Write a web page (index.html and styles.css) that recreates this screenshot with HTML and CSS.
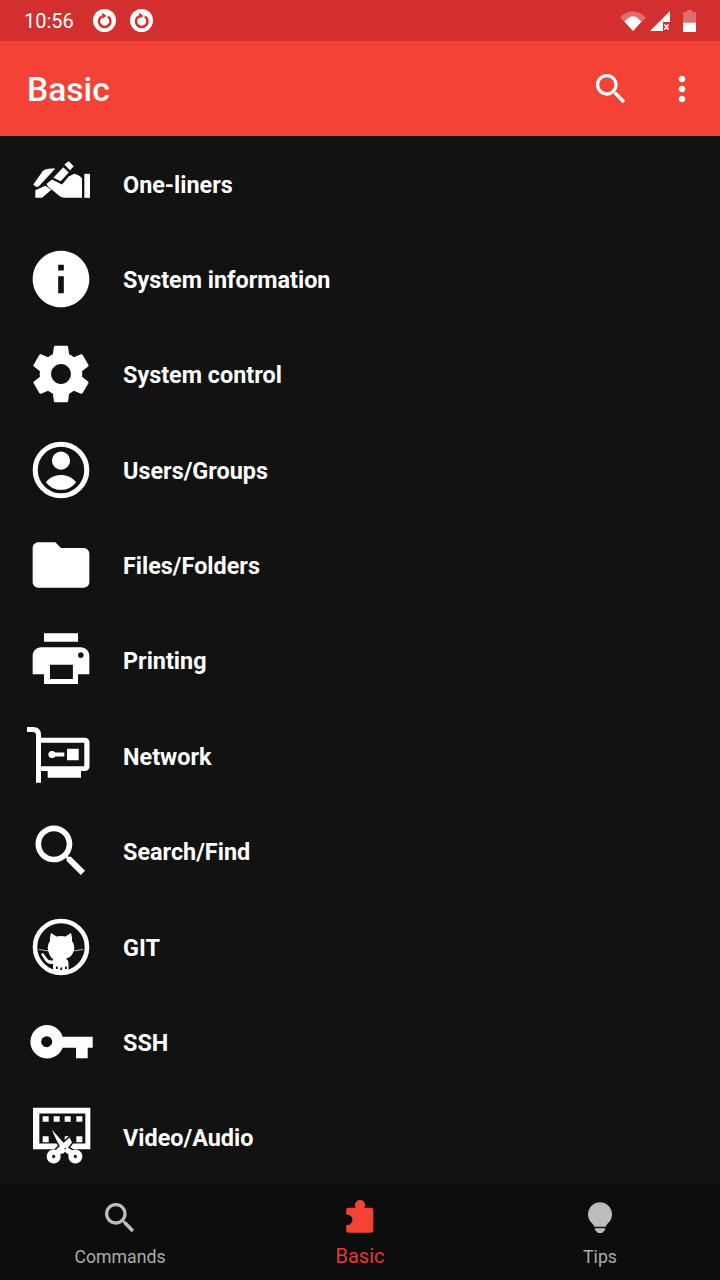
FILE: index.html
```html
<!DOCTYPE html>
<html lang="en">
<head>
  <meta charset="UTF-8" />
  <meta name="viewport" content="width=device-width, initial-scale=1" />
  <title>Basic</title>
  <link rel="stylesheet" href="styles.css">
</head>
<body>

<div class="status-bar">
  <span class="clock">10:56</span>
  <svg class="note-icon" viewBox="0 0 24 24"><circle cx="12" cy="12" r="12" fill="#fff"/><path d="M9.300 7.600a6 6 0 1 0 6.200.2" fill="none" stroke="#d32f2f" stroke-width="2.600"/><path d="M9.600 3.600l4.400 3.600-4.400 3z" fill="#d32f2f"/></svg>
  <svg class="note-icon" viewBox="0 0 24 24"><circle cx="12" cy="12" r="12" fill="#fff"/><path d="M9.300 7.600a6 6 0 1 0 6.200.2" fill="none" stroke="#d32f2f" stroke-width="2.600"/><path d="M9.600 3.600l4.400 3.600-4.400 3z" fill="#d32f2f"/></svg>
  <div class="status-right">
    <svg class="wifi-icon" viewBox="0 0 26 20"><path d="M0 6.500C3.500 2.500 8 .2 13 .2s9.500 2.300 13 6.300L13 20z" fill="#fff" fill-opacity=".3"/><path d="M4.500 10.500C7 8.300 9.800 5.200 13 5.200s6 3.100 8.500 5.300L13 20z" fill="#fff"/></svg>
    <svg class="cell-icon" viewBox="0 0 20 20"><path d="M0 20L20 0v11h-7v9z" fill="#fff"/><path d="M14.500 13.500l4 5m0-5l-4 5" stroke="#fff" stroke-width="1.600"/></svg>
    <svg class="battery-icon" viewBox="0 0 13 22"><path d="M4 0h5v2h4v10H0V2h4z" fill="#fff" fill-opacity=".3"/><path d="M0 12.500h13V22H0z" fill="#fff"/></svg>
  </div>
</div>

<header class="app-bar">
  <h1>Basic</h1>
  <svg class="bar-icon" viewBox="0 0 24 24"><path d="M15.500 14h-.79l-.28-.27C15.410 12.590 16 11.110 16 9.500 16 5.910 13.090 3 9.500 3S3 5.910 3 9.500 5.910 16 9.500 16c1.610 0 3.090-.59 4.230-1.570l.27.28v.79l5 4.990L20.490 19l-4.990-5zm-6 0C7.010 14 5 11.990 5 9.500S7.010 5 9.500 5 14 7.010 14 9.500 11.990 14 9.500 14z"/></svg>
  <svg class="bar-icon" viewBox="0 0 24 24"><path d="M12 8c1.100 0 2-.9 2-2s-.9-2-2-2-2 .9-2 2 .9 2 2 2zm0 2c-1.100 0-2 .9-2 2s.9 2 2 2 2-.9 2-2-.9-2-2-2zm0 6c-1.100 0-2 .9-2 2s.9 2 2 2 2-.9 2-2-.9-2-2-2z"/></svg>
</header>

<main class="topic-list">
  <div class="topic">
    <svg class="topic-icon" viewBox="3 -13.500 204 204">
      <path d="M22 90L50 50Q58 40 88 42L38 96Q30 100 22 90z"/>
      <path d="M28 130V107L58 94L76 106L48 130z"/>
      <path d="M82 70L112 38L128 54L104 80z"/>
      <path d="M115 30L128 20L143 35L132 47z"/>
      <path d="M62 88L78 75L108 90L128 66L145 58Q163 63 168 72V130H115Q105 130 95 120L65 95z"/>
      <path d="M175 58H192V130H175z"/>
    </svg>
    <span>One-liners</span>
  </div>
  <div class="topic">
    <svg class="topic-icon" viewBox="0 0 24 24"><path d="M12 2C6.480 2 2 6.480 2 12s4.480 10 10 10 10-4.480 10-10S17.520 2 12 2zm1 15h-2v-6h2v6zm0-8h-2V7h2v2z"/></svg>
    <span>System information</span>
  </div>
  <div class="topic">
    <svg class="topic-icon" viewBox="0 0 24 24"><path d="M19.430 12.980c.04-.32.07-.64.07-.98s-.03-.66-.07-.98l2.110-1.650c.19-.15.24-.42.12-.64l-2-3.460c-.12-.22-.39-.3-.61-.22l-2.490 1c-.52-.4-1.080-.73-1.690-.98l-.38-2.650C14.460 2.180 14.250 2 14 2h-4c-.25 0-.46.18-.49.42l-.38 2.650c-.61.25-1.170.59-1.690.98l-2.490-1c-.23-.09-.49 0-.61.22l-2 3.460c-.13.22-.07.49.12.64l2.110 1.650c-.04.32-.07.65-.07.98s.03.66.07.98l-2.110 1.650c-.19.15-.24.42-.12.64l2 3.460c.12.22.39.3.61.22l2.490-1c.52.4 1.080.73 1.690.98l.38 2.650c.03.24.24.42.49.42h4c.25 0 .46-.18.49-.42l.38-2.650c.61-.25 1.170-.59 1.690-.98l2.490 1c.23.09.49 0 .61-.22l2-3.460c.12-.22.07-.49-.12-.64l-2.110-1.650zM12 15.500c-1.930 0-3.500-1.570-3.500-3.500s1.570-3.500 3.500-3.500 3.500 1.570 3.500 3.500-1.570 3.500-3.500 3.500z"/></svg>
    <span>System control</span>
  </div>
  <div class="topic">
    <svg class="topic-icon" viewBox="0 0 24 24">
      <circle cx="12" cy="12" r="9.100" fill="none" stroke="currentColor" stroke-width="1.800"/>
      <circle cx="12" cy="8.700" r="3.200"/>
      <path d="M6.700 16.300C8 14.600 10 13.800 12 13.800s4 .8 5.300 2.500C16 18 14.200 19 12 19s-4-1-5.300-2.700z"/>
    </svg>
    <span>Users/Groups</span>
  </div>
  <div class="topic">
    <svg class="topic-icon" viewBox="0 0 24 24"><path d="M10 4H4c-1.100 0-2 .9-2 2v12c0 1.100.9 2 2 2h16c1.100 0 2-.9 2-2V8c0-1.100-.9-2-2-2h-8l-2-2z"/></svg>
    <span>Files/Folders</span>
  </div>
  <div class="topic">
    <svg class="topic-icon" viewBox="0 0 24 24"><path d="M6 2.600h12v3H6zM5 7.500h14c1.660 0 3 1.340 3 3V17h-4v3.500H6V17H2v-6.500c0-1.660 1.340-3 3-3zm3.100 6.200v5h8.100v-5zM19 9.300c-.55 0-1 .45-1 1s.45 1 1 1 1-.45 1-1-.45-1-1-1z" fill-rule="evenodd"/></svg>
    <span>Printing</span>
  </div>
  <div class="topic">
    <svg class="topic-icon" viewBox="0 0 68 68">
      <path d="M0 7.400H6Q11.500 7.400 11.500 13V60.800" fill="none" stroke="currentColor" stroke-width="5"/>
      <path d="M14 15.800H58a4.500 4.500 0 0 1 4.500 4.500V44.500a4.500 4.500 0 0 1-4.500 4.500H54V55.800H20.700V49H14V44.200H57.300V20.800H14z"/>
      <circle cx="25" cy="32.500" r="3.600"/>
      <path d="M27 30.500H37.300V34.500H27zM40 26.800H51.700V38.200H40z"/>
    </svg>
    <span>Network</span>
  </div>
  <div class="topic">
    <svg class="topic-icon" viewBox="0 0 24 24"><path d="M15.500 14h-.79l-.28-.27C15.410 12.590 16 11.110 16 9.500 16 5.910 13.090 3 9.500 3S3 5.910 3 9.500 5.910 16 9.500 16c1.610 0 3.090-.59 4.230-1.570l.27.28v.79l5 4.990L20.490 19l-4.990-5zm-6 0C7.010 14 5 11.990 5 9.500S7.010 5 9.500 5 14 7.010 14 9.500 11.990 14 9.500 14z"/></svg>
    <span>Search/Find</span>
  </div>
  <div class="topic">
    <svg class="topic-icon" viewBox="0 0 68 68">
      <circle cx="34" cy="34" r="26" fill="none" stroke="currentColor" stroke-width="4.600"/>
      <path d="M24 20L29.500 23.500Q34 22.600 38.500 23.500L44 20Q45.500 25 45 28Q48 32 47 37Q45.500 44 39 45.500Q41.500 47 41.500 50V59H26V51H24Q20 51 17 46L14 41L16 40L19 44Q21 48 26 47.500V46Q22.500 44 21 37Q20 32 23 28Q22.500 25 24 20z"/>
      <path d="M12 36.500L22 38M46 38L56 36.500" fill="none" stroke="currentColor" stroke-width=".7"/>
      <path d="M29 53.500h1.800v2.600H29zM33.300 54.500h1.800v2.600h-1.800zM38 53.500h1.800v2.600H38z" fill="#121212"/>
    </svg>
    <span>GIT</span>
  </div>
  <div class="topic">
    <svg class="topic-icon" viewBox="0 0 68 68"><path d="M19.700 17a16.700 16.700 0 0 1 16 11.700H65.700V39.700H60.700V50.300H49V39.700H35.700A16.700 16.700 0 1 1 19.700 17zM19.700 28.200a5.500 5.500 0 1 0 0 11 5.500 5.500 0 0 0 0-11z" fill-rule="evenodd"/></svg>
    <span>SSH</span>
  </div>
  <div class="topic">
    <svg class="topic-icon" viewBox="0 -4.500 204 204">
      <path d="M18 10H190V134H18zM37 27V117H175V27z" fill-rule="evenodd"/>
      <path d="M47 35h18v17H47zM80 35h18v17H80zM113 35h18v17h-18zM148 35h18v17h-18zM47 95h18v18H47zM113 95h18v18h-18zM148 95h18v18h-18z"/>
      <path d="M75 76L122 129Q135 136 140 141L125 151L105 136Q85 104 75 76zM128 99L135 114L110 146L92 151L88 134z" stroke="#121212" stroke-width="9" fill="#121212"/>
      <path d="M75 76L122 129Q135 136 140 141L125 151L105 136Q85 104 75 76zM128 99L135 114L110 146L92 151L88 134z"/>
      <path d="M80 135a21 21 0 1 0 .01 0zM80 151a5 5 0 1 1-.01 0zM145 135a21 21 0 1 0 .01 0zM145 151a5 5 0 1 1-.01 0z" fill-rule="evenodd"/>
      <circle cx="115" cy="132" r="2.500" fill="#121212"/>
    </svg>
    <span>Video/Audio</span>
  </div>
</main>

<nav class="tab-bar">
  <div class="tab">
    <svg class="tab-icon" viewBox="0 0 24 24"><path d="M15.500 14h-.79l-.28-.27C15.410 12.590 16 11.110 16 9.500 16 5.910 13.090 3 9.500 3S3 5.910 3 9.500 5.910 16 9.500 16c1.610 0 3.090-.59 4.230-1.570l.27.28v.79l5 4.990L20.490 19l-4.990-5zm-6 0C7.010 14 5 11.990 5 9.500S7.010 5 9.500 5 14 7.010 14 9.500 11.990 14 9.500 14z"/></svg>
    <span>Commands</span>
  </div>
  <div class="tab active">
    <svg class="tab-icon" viewBox="0 0 40 40"><path d="M8.500 9.700H15.700a5 5 0 1 1 8.600 0H31a2.300 2.300 0 0 1 2.300 2.300V32.400a2.300 2.300 0 0 1-2.300 2.300H8.500a2.300 2.300 0 0 1-2.300-2.300V27h1a5.200 5.200 0 0 0 0-10.400h-1V12a2.300 2.300 0 0 1 2.300-2.300z"/></svg>
    <span>Basic</span>
  </div>
  <div class="tab">
    <svg class="tab-icon" viewBox="0 0 40 40"><path d="M20 4.300a12 12 0 0 0-7.500 21.400q1.500 1.300 1.800 3h11.400q.3-1.700 1.800-3A12 12 0 0 0 20 4.300zM14.800 30.200h10.400L25 32l-3 3h-4l-3-3z"/></svg>
    <span>Tips</span>
  </div>
</nav>

</body>
</html>
```

FILE: styles.css
```css
body {
  font-family: Roboto, Arial, sans-serif;
  background: #121212;
  color: white;
  margin: 0;
  height: 1280px;
  overflow: hidden;
  display: flex;
  flex-direction: column;
}
.status-bar {
  height: 41px;
  flex: none;
  background: #d32f2f;
  display: flex;
  align-items: center;
  padding: 0 24px;
  box-sizing: border-box;
}
.clock {
  font-size: 20px;
  width: 69px;
}
.note-icon {
  width: 23px;
  height: 23px;
  margin-right: 14px;
}
.status-right {
  margin-left: auto;
  display: flex;
  align-items: center;
  gap: 4px;
}
.wifi-icon {
  width: 26px;
  height: 20px;
}
.cell-icon {
  width: 20px;
  height: 20px;
  margin-right: 9px;
}
.battery-icon {
  width: 13px;
  height: 22px;
}
.app-bar {
  height: 95px;
  flex: none;
  background: #f44336;
  display: flex;
  align-items: center;
  gap: 31px;
  padding: 0 18px 0 27px;
}
.app-bar h1 {
  margin: 0 auto 0 0;
  padding-top: 2px;
  font-size: 33.6px;
  font-weight: 500;
}
.bar-icon {
  width: 40px;
  height: 40px;
  fill: white;
}
.topic-list {
  flex: 1;
  display: flex;
  flex-direction: column;
}
.topic {
  flex: 1;
  display: flex;
  align-items: center;
  gap: 28px;
  padding-left: 27px;
  font-size: 23.4px;
  font-weight: 700;
}
.topic span {
  padding-top: 2px;
}
.topic-icon {
  width: 68px;
  height: 68px;
  fill: currentColor;
}
.tab-bar {
  height: 95px;
  flex: none;
  background: #0d0d0d;
  display: flex;
}
.tab {
  flex: 1;
  display: flex;
  flex-direction: column;
  align-items: center;
  padding-top: 13px;
  font-size: 17.7px;
  color: #ababab;
}
.tab-icon {
  width: 40px;
  height: 40px;
  fill: #bdbdbd;
  margin-bottom: 9px;
}
.tab.active {
  color: #e53935;
  font-size: 20px;
}
.tab.active .tab-icon {
  fill: #f44336;
  margin-bottom: 6px;
}
```
